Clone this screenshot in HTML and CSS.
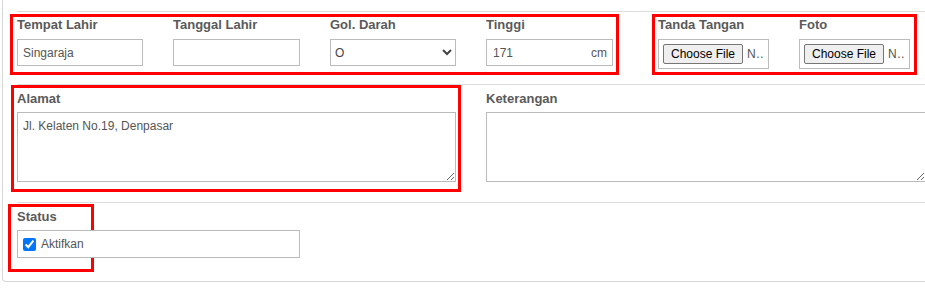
FILE: index.html
```html
<!DOCTYPE html>
<html lang="id">
<head>
<meta charset="utf-8">
<title>Form</title>
<link rel="stylesheet" href="styles.css">
</head>
<body>
<div class="card">
  <div class="sep"></div>
  <div class="row row-1">
    <div class="mark group-a">
      <div class="field"><label class="lbl">Tempat Lahir</label><input class="ctl w126" type="text" value="Singaraja"></div>
      <div class="field"><label class="lbl">Tanggal Lahir</label><input class="ctl w127" type="text" value=""></div>
      <div class="field"><label class="lbl">Gol. Darah</label><select class="ctl sel w126"><option>O</option><option>A</option><option>B</option><option>AB</option></select></div>
      <div class="field"><label class="lbl">Tinggi</label><div class="ctl suffix-box w127"><input class="bare" type="text" value="171"><span class="suffix">cm</span></div></div>
    </div>
    <div class="mark group-b">
      <div class="field"><label class="lbl">Tanda Tangan</label><div class="ctl file-box"><input class="file" type="file"></div></div>
      <div class="field"><label class="lbl">Foto</label><div class="ctl file-box"><input class="file" type="file"></div></div>
    </div>
  </div>
  <div class="sep sep-mid1"></div>
  <div class="row row-2">
    <div class="mark group-c">
      <label class="lbl lbl-tight">Alamat</label>
      <textarea class="ctl area area-a">Jl. Kelaten No.19, Denpasar</textarea>
    </div>
    <div class="field field-ket">
      <label class="lbl lbl-tight">Keterangan</label>
      <textarea class="ctl area area-k"></textarea>
    </div>
  </div>
  <div class="sep sep-mid2"></div>
  <div class="row row-3">
    <div class="mark group-d">
      <label class="lbl lbl-tight">Status</label>
      <div class="ctl status-box">
        <label class="check"><input type="checkbox" checked><span>Aktifkan</span></label>
      </div>
    </div>
  </div>
</div>
</body>
</html>
```
FILE: styles.css
```css
* {
  box-sizing: border-box;
}

html,
body {
  margin: 0;
  padding: 0;
  background: #fff;
}

html {
  overflow: hidden;
}

body {
  width: 925px;
  height: 291px;
  overflow: hidden;
  font-family: "Liberation Sans", Arial, sans-serif;
  color: #555;
}

.card {
  margin-left: 2px;
  width: 960px;
  height: 282px;
  padding: 11px 0 0 14px;
  border-left: 1px solid #d6d6d6;
  border-bottom: 1px solid #d6d6d6;
  border-bottom-left-radius: 4px;
}

.sep {
  height: 1px;
  background: #ddd;
}

.sep-mid1 {
  margin-top: 9px;
}

.sep-mid2 {
  margin-top: 10px;
}

.row {
  display: flex;
  align-items: flex-start;
}

.row-1 {
  margin-top: 2px;
}

.row-3 {
  margin-top: 1px;
}

.mark {
  border: 3px solid #f00;
}

.lbl {
  display: block;
  font-size: 13px;
  line-height: 15px;
  font-weight: bold;
  color: #5a5a5a;
  margin-bottom: 7px;
  white-space: nowrap;
}

.lbl-tight {
  margin-bottom: 6px;
}

.ctl {
  display: block;
  height: 27px;
  margin: 0;
  border: 1px solid #bbb;
  border-radius: 0;
  background: #fff;
  padding: 0 5px;
  font-family: "Liberation Sans", Arial, sans-serif;
  font-size: 12px;
  color: #555;
  outline: none;
}

.w126 {
  width: 126px;
}

.w127 {
  width: 127px;
}

/* group A */
.group-a {
  margin-left: -7px;
  width: 609px;
  padding: 0 3px 6px 4px;
  display: grid;
  grid-template-columns: 156px 157px 156px 127px;
}

.sel {
  padding: 0 2px 0 0;
  color: #444;
}

.suffix-box {
  display: flex;
  align-items: center;
  padding: 0 5px 0 6px;
}

.bare {
  flex: 1;
  min-width: 0;
  border: none;
  padding: 0;
  margin: 0;
  outline: none;
  background: transparent;
  font-family: "Liberation Sans", Arial, sans-serif;
  font-size: 12px;
  color: #555;
}

.suffix {
  font-size: 12px;
  color: #555;
}

/* group B */
.group-b {
  margin-left: 33px;
  width: 265px;
  padding: 0 4px 3px 3px;
  display: grid;
  grid-template-columns: 141px 111px;
}

.file-box {
  width: 111px;
  height: 30px;
  padding: 4px 4px 0 4px;
  overflow: hidden;
}

.file {
  width: 101px;
  font-family: "Liberation Sans", Arial, sans-serif;
  font-size: 12px;
  color: #555;
}

.file::file-selector-button {
  height: 20px;
  margin: 0 4px 0 0;
  padding: 0 7px;
  border: 1px solid #767676;
  border-radius: 2px;
  background: #efefef;
  color: #000;
  font-family: "Liberation Sans", Arial, sans-serif;
  font-size: 12px;
}

/* group C */
.group-c {
  margin-left: -6px;
  width: 450px;
  padding: 3px 2px 7px 3px;
}

.area {
  height: 70px;
  padding: 6px 5px;
  line-height: 14px;
  resize: both;
}

.area-a {
  width: 439px;
}

.field-ket {
  margin-left: 25px;
  padding-top: 6px;
}

.area-k {
  width: 440px;
}

/* group D */
.group-d {
  margin-left: -9px;
  width: 86px;
  padding: 2px 0 11px 6px;
}

.status-box {
  width: 283px;
  height: 28px;
  display: flex;
  align-items: center;
  padding: 0 5px;
}

.check {
  display: flex;
  align-items: center;
  font-size: 12px;
  color: #555;
}

.check input {
  width: 13px;
  height: 13px;
  margin: 1px 5px 0 0;
}
```
